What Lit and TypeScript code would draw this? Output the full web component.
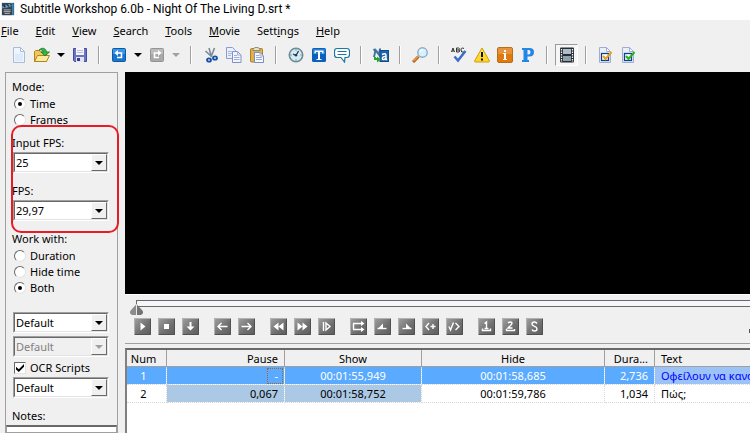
import { LitElement, html, css, svg, nothing } from "lit";
import { customElement, property, state } from "lit/decorators.js";
import { classMap } from "lit/directives/class-map.js";

const TOOL_ICONS: Record<string, unknown> = {
  app: svg`<rect x="1" y="1" width="14" height="14" fill="#2b4a63"/><path d="M1 5 13 1l1 3L2 8z" fill="#6f9fc0"/><path d="m3 4 2 2M7 3l2 2M11 2l1 2" stroke="#14202c" stroke-width="1.5"/><rect x="2" y="7" width="10" height="8" fill="#3a4045"/><path d="M3 9h8M3 11h8M4 13h6" stroke="#c4ccd1"/><path d="M13.500 2v13" stroke="#3b86b4" stroke-width="2"/>`,
  new: svg`<path d="M2.500.5h7l4 4v11h-11z" fill="#eef5fc" stroke="#a9bdd8"/><path d="M9.500.5v4h4z" fill="#fff" stroke="#a9bdd8"/><path d="M4 13V7l8-1v8H4z" fill="#dceafa"/>`,
  open: svg`<path d="M.5 14.500v-10l1-1h4l1 1.500h6v9.500z" fill="#f0c95a" stroke="#b3841c"/><path d="m.5 14.500 3-6h12l-3 6z" fill="#fdeaa0" stroke="#b3841c"/><path d="M5 3c3-3 7-2 7.500 2h3L11 9 7 5h2.500C9 3 7 2.500 5 3z" fill="#37b34a" stroke="#147a27" stroke-width=".8"/>`,
  save: svg`<path d="M1.500 1.500h13v13h-12l-1-1z" fill="#6d74c0" stroke="#434c9f"/><rect x="4" y="1" width="8" height="7" fill="#f3f5fb"/><path d="M5 3.500h6M5 5.500h6" stroke="#b8c0dc"/><rect x="4" y="10" width="8" height="5" fill="#dfe3f2"/><rect x="5" y="11" width="3" height="3" fill="#343e91"/>`,
  undo: svg`<rect x="1.500" y="1.500" width="13" height="13" rx="1" fill="#1874cd" stroke="#0d59a8"/><path d="M2 2h12v5H2z" fill="#3b94e4"/><path d="M6 6h4.500v4.500H6" fill="none" stroke="#fff" stroke-width="1.600"/><path d="M3.500 6 7 3v6z" fill="#fff"/>`,
  redo: svg`<rect x="1.500" y="1.500" width="13" height="13" rx="1" fill="#a8a8a8" stroke="#959595"/><path d="M2 2h12v5H2z" fill="#bcbcbc"/><path d="M10 6H5.500v4.500H10" fill="none" stroke="#fff" stroke-width="1.600"/><path d="M12.500 6 9 3v6z" fill="#fff"/>`,
  cut: svg`<path d="m6 1 2.500 9M11.500 1 8 10M2.500 4 9 10" fill="none" stroke="#7b8a98" stroke-width="1.600"/><ellipse cx="6" cy="13" rx="2" ry="1.700" fill="none" stroke="#1550a6" stroke-width="1.800"/><ellipse cx="12" cy="11" rx="2" ry="1.700" fill="none" stroke="#1550a6" stroke-width="1.800"/>`,
  copy: svg`<path d="M.5.5h6l3 3v8h-9z" fill="#e9effb" stroke="#8d9cce"/><path d="M2 4.500h4M2 6.500h4M2 8.500h3" stroke="#a9b6dc"/><path d="M6.500 4.500h5l3.500 3.500v7.500H6.500z" fill="#f1f5fd" stroke="#8290c6"/><path d="M11.500 4.500V8H15M8 8.500h3M8 10.500h5.500M8 12.500h5.500" fill="none" stroke="#a0aed8"/>`,
  paste: svg`<rect x="1.500" y="1.500" width="12" height="13.500" rx="1" fill="#e0b04a" stroke="#a6822c"/><path d="M4 3.500V2l2-1.500h3L11 2v1.500z" fill="#e8e2c0" stroke="#777" stroke-width=".8"/><path d="M5.500 5.500h5.500l3.500 3.500v6.500h-9z" fill="#f6f9ff" stroke="#7f8ec0"/><path d="M11 5.500V9h3.500M7 8.500h3M7 10.500h6M7 12.500h6" fill="none" stroke="#9dacd6"/>`,
  clock: svg`<circle cx="8" cy="8" r="6.700" fill="#d3ebf3" stroke="#6c8d99" stroke-width="1.600"/><path d="M8 2.500v1M8 12.500v1M2.500 8h1M12.500 8h1" stroke="#45606c"/><path d="M8 8.500 10.500 4M8 8.500 5 7" stroke="#283842" stroke-width="1.300"/><circle cx="8" cy="8.300" r="1.200" fill="#283842"/>`,
  title: svg`<rect x="1" y="1" width="14" height="14" rx="1.500" fill="#0a62bc"/><path d="M2 2h12v5H2z" fill="#2780d5"/><path d="M3.500 3.500h9v3h-1.200L11 5H9v7h1.500v1h-5v-1H7V5H5l-.3 1.500H3.500z" fill="#fff"/>`,
  bubble: svg`<path d="M3 1.500h10q2.500 0 2.500 3v3q0 3-2.500 3h-2L10.500 15 7 10.500H3q-2.500 0-2.500-3v-3q0-3 2.500-3z" fill="#fff" stroke="#1c76a8" stroke-width="1.200"/><path d="M3.500 4.500h9M3.500 7.500h9" stroke="#1c76a8" stroke-width="1.200"/>`,
  translate: svg`<path d="m0 2 2.500-.5 3 3.500L6 1.500h2V4L6.500 6 9 10H6.500L3 5.500 2 10H0l1.200-5z" fill="#4274a3"/><rect x="7" y="3.500" width="8.500" height="11" fill="#1c65ad" stroke="#144b86"/><path d="M9 7.500q4-2 4 1v4h1.200M13 9.500c-4.500-.5-4.500 3.500-2 3L13 11.500" fill="none" stroke="#fff" stroke-width="1.400"/><path d="M1 10v3h3v2.500L8 12.500l-4-3V11H3v-1z" fill="#27a436"/>`,
  find: svg`<path d="m1 15 5.500-5.500" stroke="#b55d1a" stroke-width="3"/><path d="m1.500 14 4.500-4.500" stroke="#f0a04b" stroke-width="1.300"/><circle cx="10.500" cy="5.500" r="4.700" fill="#d8f0ff" stroke="#8bacc4" stroke-width="1.400"/><path d="M8 5q1-2.500 3-2.500" fill="none" stroke="#fff" stroke-width="1.500"/>`,
  spell: svg`<path d="m.5 5 1.500-4 1.500 4M1 4h2M5.500 1v4H8q1.500-1 0-2Q9 1 7.500 1zM5.500 3H8M13 1.500q-3-1.500-3 1.500t3 2" fill="none" stroke="#333"/><path d="m3.500 9.500 3.500 4L14.500 4" fill="none" stroke="#3c6cc9" stroke-width="2.500"/>`,
  warn: svg`<path d="M8 1 15.500 14q0 1-1 1h-13q-1 0-1-1z" fill="#ffd62c" stroke="#d39a0c"/><path d="M8 3 5 8h6z" fill="#ffe775"/><path d="M8 5v5" stroke="#111" stroke-width="2"/><rect x="7" y="11.500" width="2" height="2" fill="#111"/>`,
  info: svg`<rect x=".5" y=".5" width="15" height="15" rx="1.500" fill="#e07a0c" stroke="#b5701f"/><path d="M1 1h14v6H1z" fill="#e8923a"/><path d="M7 3h2v2H7zM6 6h3v6h1v1H6v-1h1V7H6z" fill="#fff"/>`,
  pascal: svg`<path fill-rule="evenodd" d="M2 1h7.500Q14 1 14 5.200T9.500 9.500H7.500V13H9v2H2v-2h1.500V3H2zM7.500 3v4.500h1Q10.500 7.500 10.500 5.200T8.500 3z" fill="#2387e6"/>`,
  film: svg`<rect x="1" y=".5" width="14" height="15" rx="1" fill="#252d33"/><rect x="4" y="2" width="8" height="5" fill="#aebdc8"/><rect x="4" y="9" width="8" height="5" fill="#8fa0ad"/><path d="M2.500 2v13M13.500 2v13" stroke="#f3f6f8" stroke-width="1.300" stroke-dasharray="1.500 1"/>`,
  docAmber: svg`<path d="M1.500.5h7l4 4v11h-11z" fill="#eaf0fa" stroke="#9faed0"/><path d="M8.500.5v4h4z" fill="#fff" stroke="#9faed0"/><rect x="3.500" y="6.500" width="7" height="7" fill="#fff" stroke="#143c8c" stroke-width="1.300"/><path d="m5 9 2.500 3L13.500 5" fill="none" stroke="#e3a01c" stroke-width="2"/>`,
  docGreen: svg`<path d="M1.500.5h7l4 4v11h-11z" fill="#eaf0fa" stroke="#9faed0"/><path d="M8.500.5v4h4z" fill="#fff" stroke="#9faed0"/><rect x="3.500" y="6.500" width="7" height="7" fill="#fff" stroke="#143c8c" stroke-width="1.300"/><path d="m5 9 2.500 3L13.500 5" fill="none" stroke="#22b322" stroke-width="2"/>`,
};

const PLAYER_ICONS: Record<string, unknown> = {
  play: svg`<path d="M6.500 4.500v8l5-4z" fill="#fff"/>`,
  stop: svg`<rect x="6" y="6" width="5" height="5" fill="#fff"/>`,
  down: svg`<path d="M7.500 4h2v4.500h3l-4 4-4-4h3z" fill="#fff"/>`,
  left: svg`<path d="M13.500 8.500H4M7.500 5 4 8.500 7.500 12" class="line"/>`,
  right: svg`<path d="M3.500 8.500H13M9.500 5 13 8.500 9.500 12" class="line"/>`,
  rewind: svg`<path d="M8.500 4.500v8l-5-4zM13.500 4.500v8l-5-4z" fill="#fff"/>`,
  forward: svg`<path d="M8.500 4.500v8l5-4zM3.500 4.500v8l5-4z" fill="#fff"/>`,
  step: svg`<path d="M5.500 4v9M8 5v7l4-3.500z" class="line"/>`,
  shift: svg`<path d="M3 5.500h10M3 11.500h10M3.500 5.500v6" class="line"/><path d="M11 3l3.500 2.500L11 8zM11 9l3.500 2.500L11 14z" fill="#fff"/>`,
  rampStart: svg`<path d="M3.500 10.500h9" class="line"/><path d="M4.500 10 9 5.500V10z" fill="#fff"/>`,
  rampEnd: svg`<path d="M4.500 10.500h9" class="line"/><path d="M12.500 10 8 5.500V10z" fill="#fff"/>`,
  tagAdd: svg`<path d="M7 5 4 8.500 7 12M8.500 8.500h5M11 6v5" class="line"/>`,
  tagEnd: svg`<path d="M3 8.500 4.500 12l3-7.500M9.500 5l3.500 3.500L9.500 12" class="line"/>`,
  one: svg`<path d="M4.500 10.500v2h8v-2M6.500 5.500l2-1.500v6M6.500 10.500h4" class="line"/>`,
  two: svg`<path d="M4.500 11v1.500h8V11M6 5q2.500-2 4 0 0 1.500-4 5h4.500" class="line"/>`,
  sync: svg`<path d="M11 5.500Q10 4 8.500 4 6 4 6 6q0 1.500 2.500 2.300T11 11q0 2-2.500 2Q6.500 13 6 11.500" class="line"/>`,
};

const MENU = [
  ["", "F", "ile"],
  ["", "E", "dit"],
  ["", "V", "iew"],
  ["", "S", "earch"],
  ["", "T", "ools"],
  ["", "M", "ovie"],
  ["Sett", "i", "ngs"],
  ["", "H", "elp"],
];

const TOOLS: { icon: string; label: string; drop?: boolean; off?: boolean; down?: boolean }[][] = [
  [
    { icon: "new", label: "New subtitle" },
    { icon: "open", label: "Open subtitle", drop: true },
    { icon: "save", label: "Save" },
  ],
  [
    { icon: "undo", label: "Undo", drop: true },
    { icon: "redo", label: "Redo", drop: true, off: true },
  ],
  [
    { icon: "cut", label: "Cut" },
    { icon: "copy", label: "Copy" },
    { icon: "paste", label: "Paste" },
  ],
  [
    { icon: "clock", label: "Timings" },
    { icon: "title", label: "Texts" },
    { icon: "bubble", label: "Subtitles" },
  ],
  [{ icon: "translate", label: "Translator mode" }],
  [{ icon: "find", label: "Find" }],
  [
    { icon: "spell", label: "Spell check" },
    { icon: "warn", label: "Check errors" },
    { icon: "info", label: "Information" },
    { icon: "pascal", label: "Pascal scripts" },
  ],
  [{ icon: "film", label: "Video preview", down: true }],
  [
    { icon: "docAmber", label: "Mark subtitles" },
    { icon: "docGreen", label: "Approve subtitles" },
  ],
];

const PLAYER = [
  ["play", "stop", "down"],
  ["left", "right"],
  ["rewind", "forward", "step"],
  ["shift", "rampStart", "rampEnd", "tagAdd", "tagEnd"],
  ["one", "two", "sync"],
];

const ROWS = [
  { num: "1", pause: "-", show: "00:01:55,949", hide: "00:01:58,685", dur: "2,736", text: "Οφείλουν να κανο" },
  { num: "2", pause: "0,067", show: "00:01:58,752", hide: "00:01:59,786", dur: "1,034", text: "Πώς;" },
];

const base = css`
  * {
    box-sizing: border-box;
  }
  button {
    appearance: none;
    border: 0;
    padding: 0;
    margin: 0;
    background: none;
    font: inherit;
    color: inherit;
  }
  svg {
    display: block;
  }
`;

@customElement("sw-toolbar")
export class SwToolbar extends LitElement {
  static styles = [
    base,
    css`
      :host {
        display: flex;
        align-items: center;
        height: 32px;
        padding: 0 0 2px 7px;
      }
      .group {
        display: flex;
        align-items: center;
      }
      .group + .group::before {
        content: "";
        width: 2px;
        height: 18px;
        margin: 0 7px;
        background: linear-gradient(90deg, #a0a0a0 1px, #fff 1px);
      }
      .tool {
        width: 23px;
        height: 22px;
        display: grid;
        place-items: center;
      }
      .down {
        border: 1px solid #fff;
        border-top-color: #9b9b9b;
        border-left-color: #9b9b9b;
        background: #f6f6f6;
      }
      .drop {
        width: 15px;
        height: 22px;
        display: grid;
        place-items: center;
      }
      .drop::before {
        content: "";
        border: 4px solid transparent;
        border-top-color: #000;
        border-bottom: 0;
      }
      .drop:disabled::before {
        border-top-color: #a0a0a0;
      }
    `,
  ];

  render() {
    return TOOLS.map(
      (group) => html`<div class="group">
        ${group.map(
          (t) => html`<button class=${classMap({ tool: true, down: !!t.down })} aria-label=${t.label} ?disabled=${!!t.off}>
              <svg width="16" height="16" viewBox="0 0 16 16">${TOOL_ICONS[t.icon]}</svg>
            </button>
            ${t.drop ? html`<button class="drop" aria-label="${t.label} history" ?disabled=${!!t.off}></button>` : nothing}`,
        )}
      </div>`,
    );
  }
}

@customElement("sw-combo")
export class SwCombo extends LitElement {
  static styles = [
    base,
    css`
      :host {
        display: block;
        position: relative;
        height: 21px;
        border: 1px solid #fff;
        border-top-color: #a0a0a0;
        border-left-color: #a0a0a0;
      }
      .field {
        appearance: none;
        display: block;
        width: 100%;
        height: 100%;
        margin: 0;
        padding: 0 18px 0 1px;
        border: 1px solid #e3e3e3;
        border-top-color: #696969;
        border-left-color: #696969;
        border-radius: 0;
        background: #fff;
        color: #000;
        font: inherit;
        opacity: 1;
      }
      .field:disabled {
        background: #f0f0f0;
        color: #808080;
      }
      .arrow {
        position: absolute;
        top: 1px;
        right: 1px;
        bottom: 1px;
        width: 16px;
        display: grid;
        place-items: center;
        background: #f0f0f0;
        border: 1px solid #696969;
        border-top-color: #fff;
        border-left-color: #fff;
        pointer-events: none;
      }
      .arrow::before {
        content: "";
        border: 4px solid transparent;
        border-top-color: #000;
        border-bottom: 0;
      }
      .field:disabled + .arrow::before {
        border-top-color: #a0a0a0;
      }
    `,
  ];

  @property() value = "";
  @property() label = "";
  @property({ type: Boolean }) disabled = false;

  render() {
    return html`<select class="field" aria-label=${this.label} ?disabled=${this.disabled}>
        <option>${this.value}</option>
      </select>
      <span class="arrow"></span>`;
  }
}

@customElement("sw-sidebar")
export class SwSidebar extends LitElement {
  static styles = [
    base,
    css`
      :host {
        display: flex;
        flex-direction: column;
        flex: none;
        width: 113px;
        margin-left: 5px;
        padding-top: 6px;
        border: 1px solid #a0a0a0;
        border-bottom: 0;
        line-height: 16px;
      }
      .group {
        display: flex;
        flex-direction: column;
        margin: 0;
        padding: 0 8px 0 6px;
        border: 0;
      }
      .caption {
        padding: 0;
        margin-bottom: 1px;
      }
      .option {
        display: flex;
        align-items: center;
        gap: 4px;
        height: 16px;
        padding-left: 2px;
      }
      .radio,
      .check {
        appearance: none;
        flex: none;
        display: grid;
        place-items: center;
        width: 12px;
        height: 12px;
        margin: 0;
        background: #fff;
        border: 1px solid #e3e3e3;
        border-top-color: #696969;
        border-left-color: #696969;
      }
      .radio {
        border-radius: 50%;
      }
      .radio:checked::before {
        content: "";
        width: 4px;
        height: 4px;
        border-radius: 50%;
        background: #000;
      }
      .check:checked::before {
        content: "";
        width: 8px;
        height: 8px;
        background: #000;
        clip-path: polygon(0 35%, 35% 65%, 100% 0, 100% 35%, 35% 100%, 0 70%);
      }
      .rates {
        position: relative;
        display: flex;
        flex-direction: column;
        gap: 10px;
        margin: 7px 0 10px;
      }
      .rates::after {
        content: "";
        position: absolute;
        inset: -10px -2px -12px 5px;
        border: 2px solid #e81c24;
        border-radius: 10px;
        pointer-events: none;
      }
      .combo {
        margin-left: 1px;
      }
      .charsets {
        gap: 3px;
        margin: 16px 0 10px;
      }
      .scripts {
        display: flex;
        flex-direction: column;
        gap: 1px;
      }
      .notes-label {
        padding-left: 6px;
      }
      .notes {
        flex: 1;
        min-height: 0;
        width: 100%;
        margin: 1px 0 0;
        border: 1px solid #a0a0a0;
        border-top: 2px solid #696969;
        border-radius: 0;
        background: #fff;
        resize: none;
        font: inherit;
      }
    `,
  ];

  @state() private mode = "Time";
  @state() private work = "Both";

  private radio(name: string, value: string, current: string, pick: (v: string) => void) {
    return html`<label class="option">
      <input class="radio" type="radio" name=${name} .checked=${value === current} @change=${() => pick(value)} />${value}
    </label>`;
  }

  render() {
    return html`
      <div class="group" role="radiogroup" aria-labelledby="mode">
        <span class="caption" id="mode">Mode:</span>
        ${["Time", "Frames"].map((v) => this.radio("mode", v, this.mode, (x) => (this.mode = x)))}
      </div>
      <div class="rates">
        <div class="group">
          <span class="caption">Input FPS:</span>
          <sw-combo class="combo" label="Input FPS" value="25"></sw-combo>
        </div>
        <div class="group">
          <span class="caption">FPS:</span>
          <sw-combo class="combo" label="FPS" value="29,97"></sw-combo>
        </div>
      </div>
      <div class="group" role="radiogroup" aria-labelledby="work">
        <span class="caption" id="work">Work with:</span>
        ${["Duration", "Hide time", "Both"].map((v) => this.radio("work", v, this.work, (x) => (this.work = x)))}
      </div>
      <div class="group charsets">
        <sw-combo class="combo" label="Original charset" value="Default"></sw-combo>
        <sw-combo class="combo" label="Translation charset" value="Default" disabled></sw-combo>
        <div class="scripts">
          <label class="option"><input class="check" type="checkbox" checked />OCR Scripts</label>
          <sw-combo class="combo" label="OCR script" value="Default"></sw-combo>
        </div>
      </div>
      <label class="notes-label" for="notes">Notes:</label>
      <textarea class="notes" id="notes"></textarea>
    `;
  }
}

@customElement("sw-player")
export class SwPlayer extends LitElement {
  static styles = [
    base,
    css`
      :host {
        display: block;
      }
      .screen {
        height: 222px;
        background: #000;
      }
      .panel {
        padding: 5px 0 8px 5px;
        border-top: 1px solid #fff;
        border-bottom: 1px solid #a0a0a0;
      }
      .seek {
        appearance: none;
        display: block;
        width: 100%;
        height: 15px;
        margin: 0 0 3px;
        background:
          linear-gradient(#696969, #696969) 6px 0 / 100% 1px no-repeat,
          linear-gradient(#696969, #696969) 6px 6px / 100% 1px no-repeat,
          linear-gradient(#696969, #696969) 6px 0 / 1px 6px no-repeat,
          linear-gradient(#f5f5fa, #f5f5fa) 6px 1px / 100% 5px no-repeat;
      }
      .seek::-webkit-slider-thumb {
        appearance: none;
        width: 13px;
        height: 11px;
        margin-top: 4px;
        background: linear-gradient(90deg, #8c8c8c 6px, #e8e8e8 6px 7px, #747474 7px);
        clip-path: polygon(50% 0, 100% 65%, 100% 85%, 85% 100%, 15% 100%, 0 85%, 0 65%);
      }
      .controls {
        display: flex;
        align-items: center;
        gap: 15px;
        padding-left: 4px;
      }
      .set {
        display: flex;
        gap: 7px;
      }
      .key {
        width: 17px;
        height: 17px;
        border-radius: 1px;
        background: linear-gradient(135deg, #a2a2a2, #6e6e6e 60%, #5c5c5c);
        box-shadow: inset 1px 1px #b2b2b2, inset -1px -1px #505050;
      }
      .line {
        fill: none;
        stroke: #fff;
        stroke-width: 1.4;
      }
      .volume {
        width: 1px;
        height: 4px;
        margin: 8px 0 0 auto;
        background: #555;
      }
    `,
  ];

  render() {
    return html`
      <div class="screen"></div>
      <div class="panel">
        <input class="seek" type="range" min="0" max="1000" value="0" aria-label="Position" />
        <div class="controls">
          ${PLAYER.map(
            (set) => html`<div class="set">
              ${set.map(
                (k) => html`<button class="key" aria-label=${k}>
                  <svg width="17" height="17" viewBox="0 0 17 17">${PLAYER_ICONS[k]}</svg>
                </button>`,
              )}
            </div>`,
          )}
          <span class="volume"></span>
        </div>
      </div>
    `;
  }
}

@customElement("sw-list")
export class SwList extends LitElement {
  static styles = [
    base,
    css`
      :host {
        display: block;
        flex: 1;
        min-height: 0;
        margin-top: 4px;
        overflow: hidden;
        background: #fff;
        border-top: 2px solid #696969;
        border-left: 2px solid #808080;
      }
      .list {
        width: 100%;
        table-layout: fixed;
        border-collapse: separate;
        border-spacing: 0;
      }
      th,
      td {
        height: 18px;
        padding: 0 6px;
        line-height: 16px;
        white-space: nowrap;
        overflow: hidden;
        font-weight: 400;
        border-right: 1px dotted #d8d8d8;
        border-bottom: 1px dotted #d8d8d8;
        background-clip: padding-box;
      }
      th {
        height: 17px;
        line-height: 15px;
        padding-top: 1px;
        background-color: #f0f0f0;
        border-right: 1px solid #a0a0a0;
        border-bottom: 1px solid #a0a0a0;
      }
      .num {
        width: 40px;
        padding-left: 0;
        text-align: center;
      }
      .pause {
        width: 118px;
        text-align: right;
      }
      .show {
        width: 137px;
        text-align: center;
      }
      .hide {
        width: 183px;
        text-align: center;
      }
      .dur {
        width: 50px;
        padding-left: 0;
        text-align: right;
      }
      .text {
        padding-right: 0;
        border-right: 0;
        text-align: left;
      }
      .tint {
        background-color: #abc8e5;
      }
      .selected {
        color: #fff;
      }
      .selected td {
        background-color: #5aabff;
      }
      .selected .text {
        background-color: #9cc3f8;
        color: #0000ff;
      }
      .focus {
        display: inline-block;
        width: 16px;
        height: 16px;
        margin-right: -5px;
        padding-right: 4px;
        border: 1px dotted #a86428;
        line-height: 13px;
        vertical-align: top;
      }
    `,
  ];

  @state() private selected = 0;

  render() {
    return html`<table class="list">
      <thead>
        <tr>
          <th class="num">Num</th>
          <th class="pause">Pause</th>
          <th class="show">Show</th>
          <th class="hide">Hide</th>
          <th class="dur">Dura...</th>
          <th class="text">Text</th>
        </tr>
      </thead>
      <tbody>
        ${ROWS.map((r, i) => {
          const on = i === this.selected;
          return html`<tr class=${classMap({ selected: on })} @click=${() => (this.selected = i)}>
            <td class="num">${r.num}</td>
            <td class="pause tint">${on ? html`<span class="focus">${r.pause}</span>` : r.pause}</td>
            <td class="show tint">${r.show}</td>
            <td class="hide">${r.hide}</td>
            <td class="dur">${r.dur}</td>
            <td class="text">${r.text}</td>
          </tr>`;
        })}
      </tbody>
    </table>`;
  }
}

@customElement("app-root")
export class AppRoot extends LitElement {
  static styles = [
    base,
    css`
      :host {
        display: flex;
        flex-direction: column;
        height: 100vh;
        overflow: hidden;
        background: #f0f0f0;
        color: #000;
        font: 11px "Noto Sans", sans-serif;
      }
      .title {
        display: flex;
        align-items: center;
        gap: 5px;
        height: 20px;
        padding: 0 0 2px 1px;
        background: #fff;
        font-family: Roboto, sans-serif;
        font-size: 12px;
        line-height: 18px;
        white-space: nowrap;
      }
      .menu {
        display: flex;
        height: 20px;
        padding-left: 1px;
        gap: 17px;
      }
      .body {
        display: flex;
        flex: 1;
        min-height: 0;
      }
      .main {
        display: flex;
        flex-direction: column;
        flex: 1;
        min-width: 0;
        margin-left: 7px;
      }
    `,
  ];

  render() {
    return html`
      <header class="title">
        <svg width="14" height="14" viewBox="0 0 16 16">${TOOL_ICONS.app}</svg>
        <span>Subtitle Workshop 6.0b - Night Of The Living D.srt *</span>
      </header>
      <nav class="menu">${MENU.map(([a, k, b]) => html`<button>${a}<u>${k}</u>${b}</button>`)}</nav>
      <sw-toolbar></sw-toolbar>
      <div class="body">
        <sw-sidebar></sw-sidebar>
        <main class="main">
          <sw-player></sw-player>
          <sw-list></sw-list>
        </main>
      </div>
    `;
  }
}
